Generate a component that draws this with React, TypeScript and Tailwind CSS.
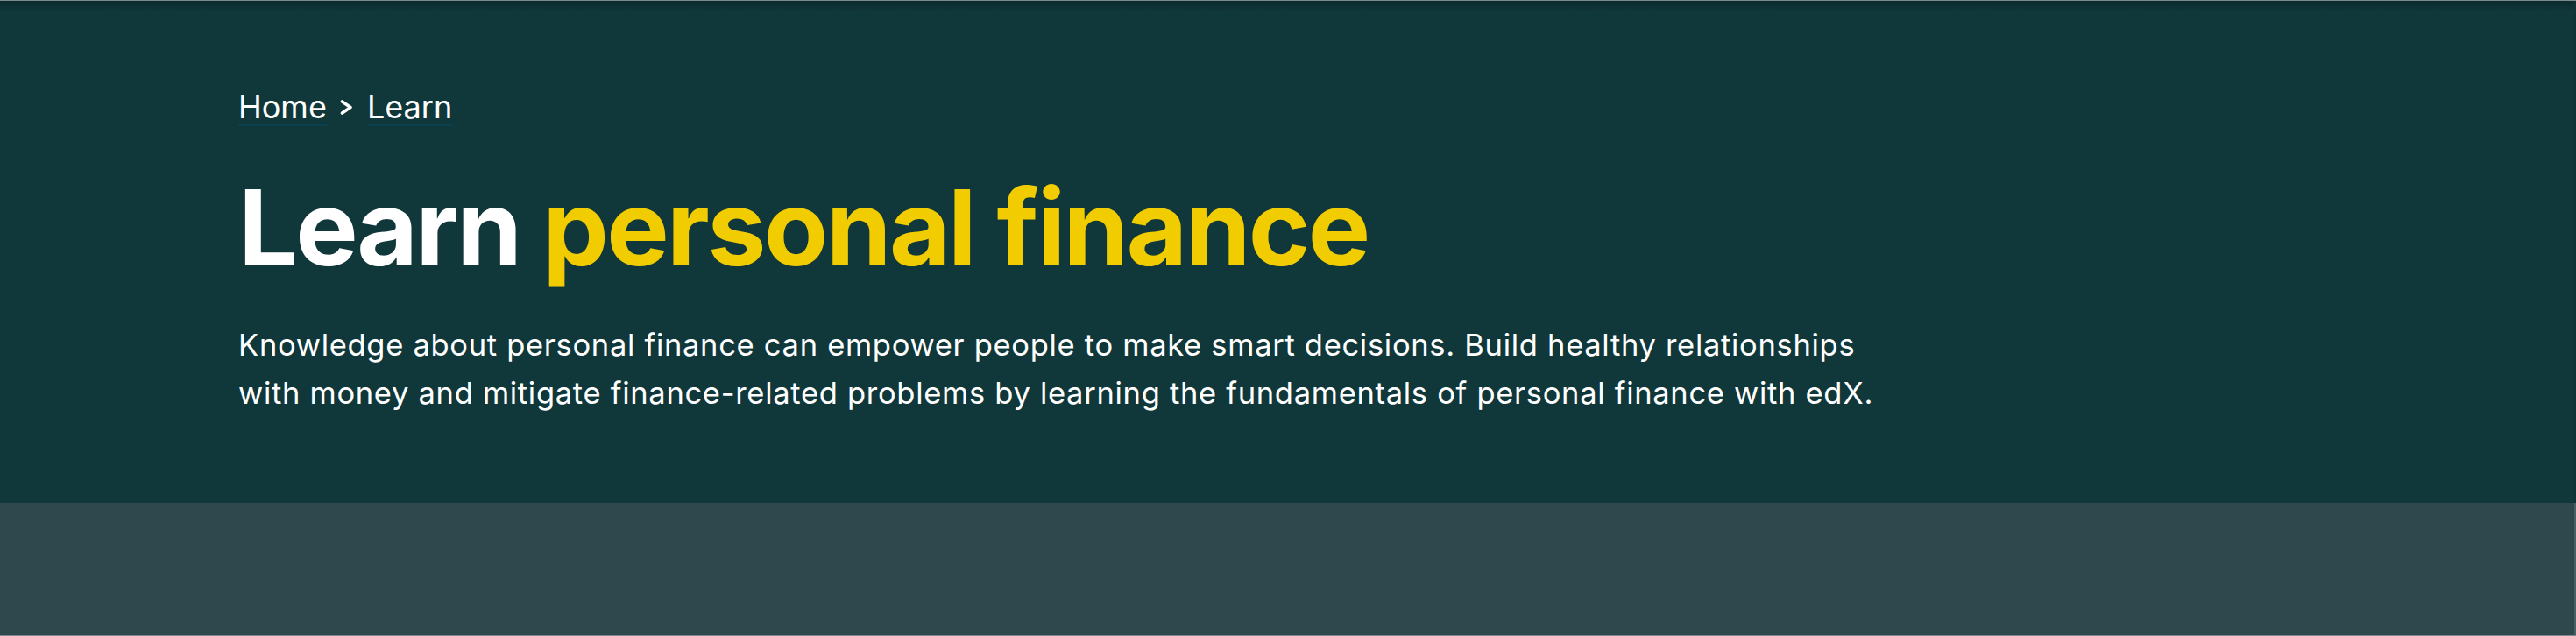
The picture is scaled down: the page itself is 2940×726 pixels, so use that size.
import React from "react";

export default function App() {
  return (
    <div className="w-[2940px] h-[726px] overflow-hidden bg-[#2f484d] border-t border-b border-[#7d8b8c] flex flex-col" style={{ fontFamily: "Inter, 'Noto Sans', sans-serif" }}>
      <section className="relative h-[573px] shrink-0 bg-[#10373a] pl-[272px] pt-[97px] border-r-2 border-[#0f3437]">
        <div className="absolute left-0 right-0 top-0 h-[12px] bg-gradient-to-b from-[#0b2a2d] to-transparent" />
        <nav className="flex items-center text-[36px] leading-[48px] text-white">
          <span className="underline decoration-[#0a4150] decoration-[3px] underline-offset-[6px]">Home</span>
          <svg className="ml-[14px] mr-[15px] w-[17px] h-[17px]" viewBox="0 0 17 17" fill="none" stroke="white" strokeWidth="3.6" strokeLinecap="round" strokeLinejoin="round">
            <path d="M3.5 2L13 8.5L3.5 15" />
          </svg>
          <span className="underline decoration-[#0a4150] decoration-[3px] underline-offset-[6px]">Learn</span>
        </nav>
        <h1 className="mt-[49px] text-[120px] leading-[130px] font-bold tracking-[-0.022em] text-white">
          Learn <span className="text-[#f0cc00]">personal finance</span>
        </h1>
        <p className="mt-[41px] max-w-[1895px] text-[34.5px] leading-[55px] tracking-[0.7px] text-white">
          Knowledge about personal finance can empower people to make smart decisions. Build healthy relationships with money and mitigate finance-related problems by learning the fundamentals of personal finance with edX.
        </p>
      </section>
      <div className="flex-1 border-r-2 border-[#4a5e60]" />
    </div>
  );
}
